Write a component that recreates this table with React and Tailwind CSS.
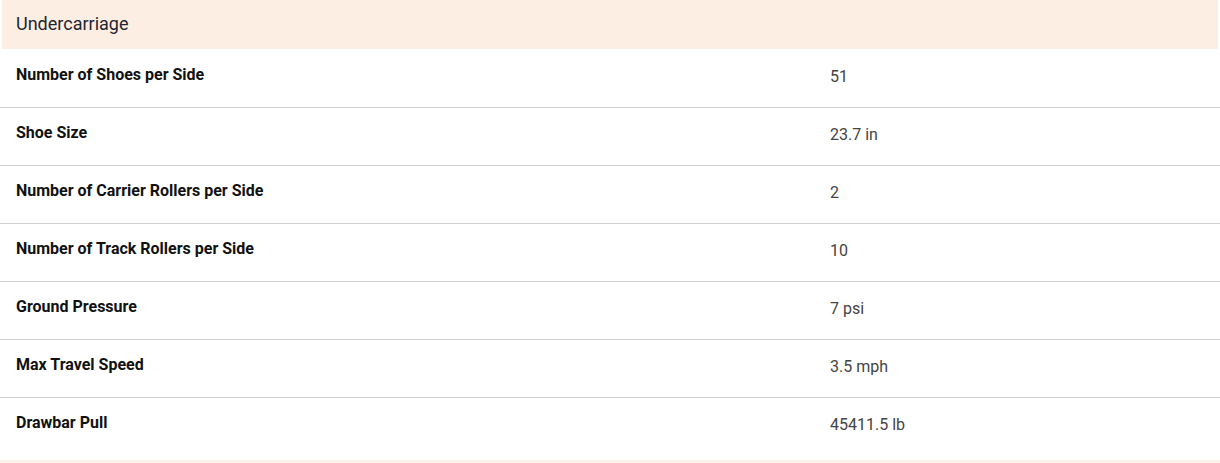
export default function App() {
  const rows = [
    ["Number of Shoes per Side", "51"],
    ["Shoe Size", "23.7 in"],
    ["Number of Carrier Rollers per Side", "2"],
    ["Number of Track Rollers per Side", "10"],
    ["Ground Pressure", "7 psi"],
    ["Max Travel Speed", "3.5 mph"],
    ["Drawbar Pull", "45411.5 lb"],
  ];
  return (
    <div className="w-[1220px] h-[463px] bg-white overflow-hidden" style={{ fontFamily: "Roboto, 'Liberation Sans', sans-serif" }}>
      <div className="mx-[2px] h-[49px] bg-[#fdeee4] flex items-center pl-[14px] pb-[2px]">
        <span className="text-[18px] text-[#1d2731] leading-none">Undercarriage</span>
      </div>
      <div className="h-px" />
      {rows.map(([k, v], i) => (
        <div
          key={k}
          className={`grid grid-cols-[814px_1fr] h-[58px] ${i < rows.length - 1 ? "border-b border-[#d0d0d0]" : ""}`}
        >
          <div className="pl-4 pt-[15px] text-[16px] leading-5 font-bold text-[#111]">{k}</div>
          <div className="pl-4 pt-[17px] text-[16px] leading-5 text-[#444]">{v}</div>
        </div>
      ))}
      <div className="mt-[4px] h-[4px] bg-[#fdf1e8]" />
    </div>
  );
}
